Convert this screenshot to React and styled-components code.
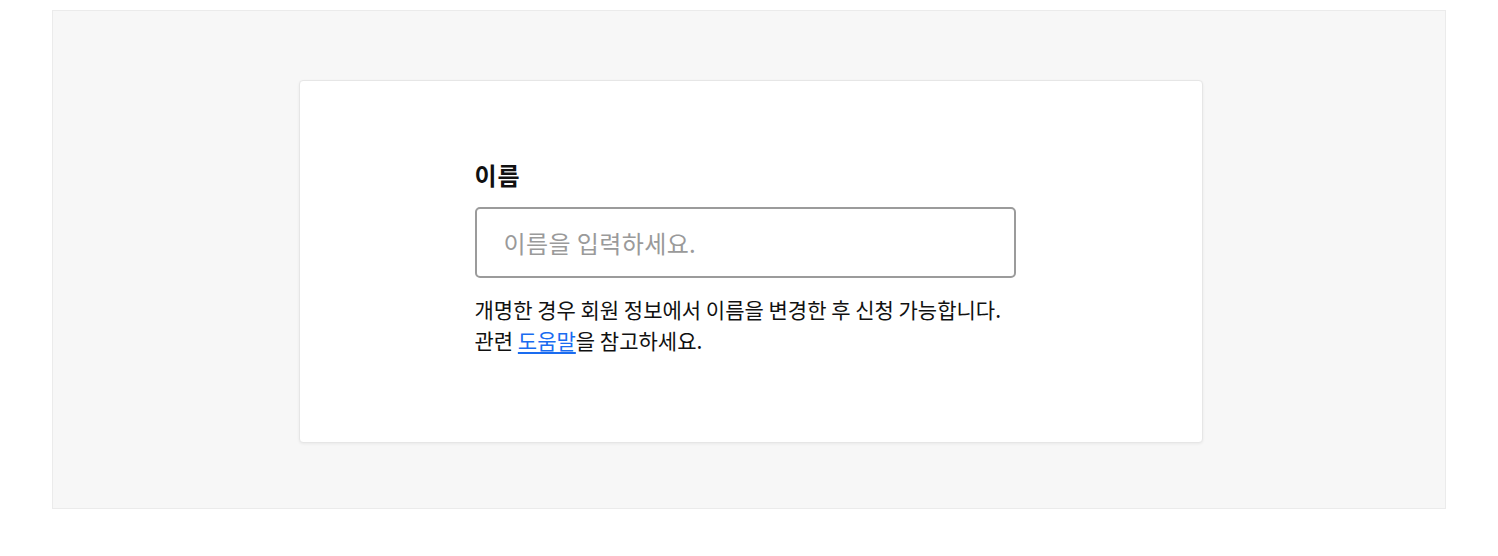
import React, { useState } from "react";
import styled, { createGlobalStyle } from "styled-components";

const GlobalStyle = createGlobalStyle`
  body {
    margin: 0;
    background: #fff;
    font-family: "Noto Sans CJK KR", "Noto Sans", sans-serif;
  }
`;

const Root = styled.div`
  padding: 10px 52px 48px;
`;

const Stage = styled.div`
  background: #f7f7f7;
  border: 1px solid #ebebeb;
  padding: 69px 0 65px 3px;
  display: flex;
  justify-content: center;
`;

const Card = styled.div`
  width: 904px;
  box-sizing: border-box;
  background: #fff;
  border: 1px solid #e6e6e6;
  border-radius: 4px;
  box-shadow: 0 1px 3px rgba(0, 0, 0, 0.06);
  padding: 78px 186px 86px 175px;
`;

const Field = styled.div`
  width: 541px;
`;

const Label = styled.label`
  display: block;
  font-size: 24px;
  font-weight: 700;
  color: #111;
  line-height: 32px;
  letter-spacing: 1px;
  margin-bottom: 16px;
`;

const Input = styled.input`
  display: block;
  width: 100%;
  box-sizing: border-box;
  height: 71px;
  padding: 0 27px;
  font-family: inherit;
  font-size: 24px;
  letter-spacing: 0.4px;
  color: #222;
  border: 2px solid #9b9b9b;
  border-radius: 5px;
  outline: none;

  &::placeholder {
    color: #9a9a9a;
  }
`;

const Help = styled.p`
  margin: 16px 0 0;
  font-size: 21px;
  line-height: 31px;
  color: #111;
`;

const HelpLink = styled.a`
  color: #1a6cf0;
  text-decoration: underline;
  text-underline-offset: 3px;
`;

export default function App() {
  const [name, setName] = useState("");

  return (
    <Root>
      <GlobalStyle />
      <Stage>
        <Card>
          <Field>
            <Label htmlFor="name">이름</Label>
            <Input
              id="name"
              value={name}
              onChange={(e) => setName(e.target.value)}
              placeholder="이름을 입력하세요."
            />
            <Help>
              개명한 경우 회원 정보에서 이름을 변경한 후 신청 가능합니다.
              <br />
              관련 <HelpLink href="#">도움말</HelpLink>을 참고하세요.
            </Help>
          </Field>
        </Card>
      </Stage>
    </Root>
  );
}
